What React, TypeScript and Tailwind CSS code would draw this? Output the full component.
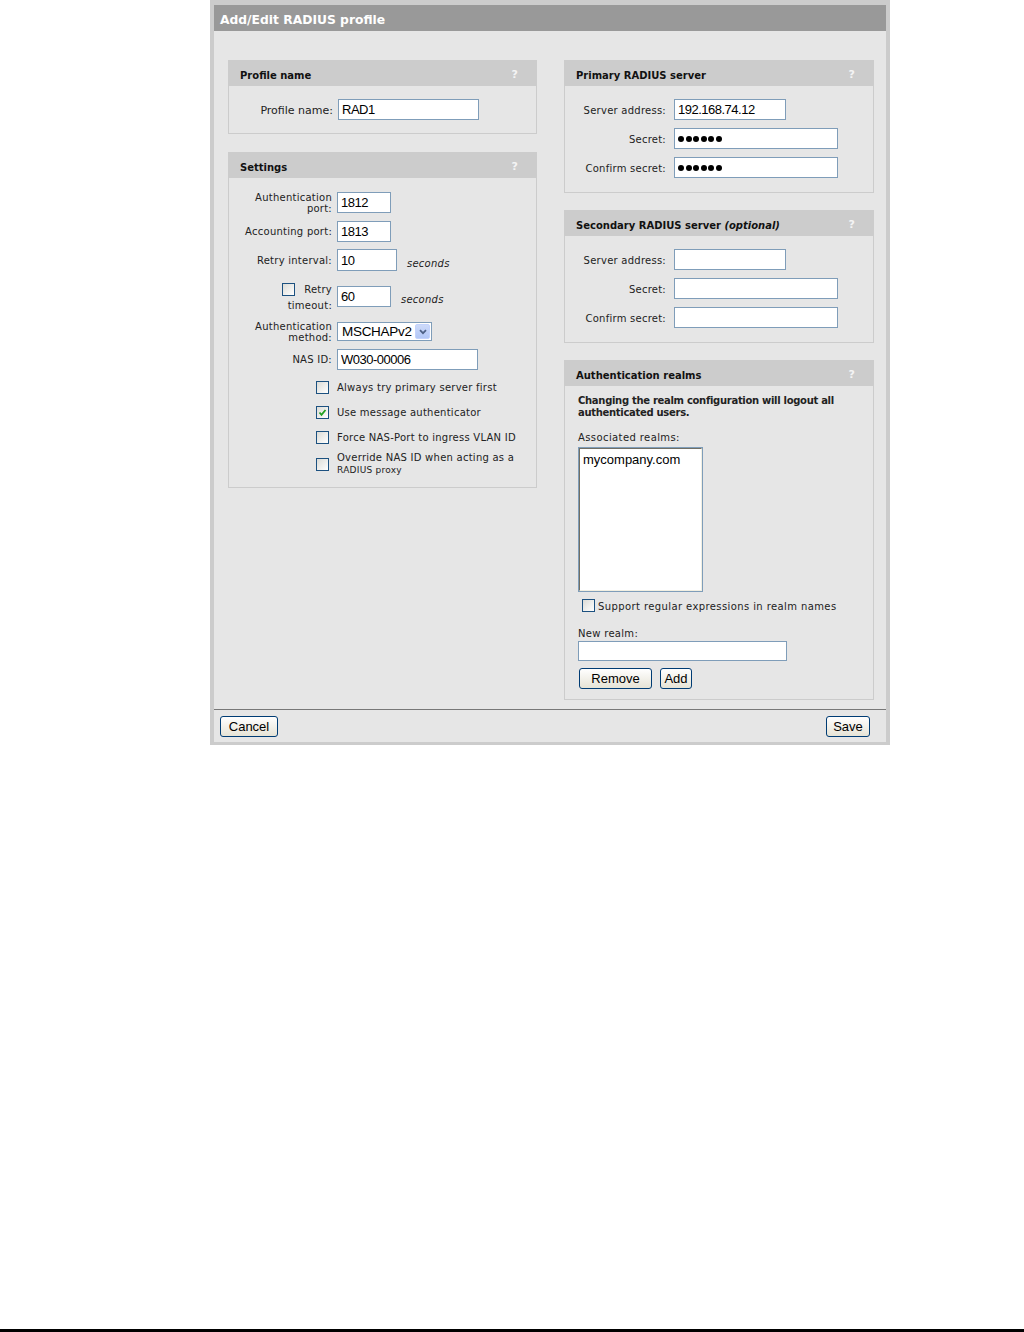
import type { ReactNode } from "react";

const verdana = "font-['DejaVu_Sans',Verdana,sans-serif] text-[10px] text-[#222]";
const labelFont = `${verdana} tracking-[0.25px]`;
const fieldFont = "font-['Liberation_Sans',Arial,sans-serif] text-black";

function Panel({ title, children }: { title: ReactNode; children: ReactNode }) {
  return (
    <div className="border border-[#cccccc] bg-[#e6e6e6]">
      <div className="flex h-[25px] items-center justify-between bg-[#cccccc] pl-[11px] pr-[18px] pt-[3px]">
        <span className="font-['DejaVu_Sans',Verdana,sans-serif] text-[10px] font-bold text-[#111]">{title}</span>
        <span className="font-['DejaVu_Sans',Verdana,sans-serif] text-[11px] font-bold text-[#f4f4f4]">?</span>
      </div>
      {children}
    </div>
  );
}

function TextBox({ value = "", width, height = 21 }: { value?: string; width: number; height?: number }) {
  return (
    <input
      readOnly
      value={value}
      style={{ width, height }}
      className={`block border border-[#7f9db9] bg-white px-[3px] text-[13px] tracking-[-0.5px] outline-none ${fieldFont}`}
    />
  );
}

function Secret({ width, filled }: { width: number; filled?: boolean }) {
  return (
    <div style={{ width }} className="flex h-[21px] items-center gap-[1.5px] border border-[#7f9db9] bg-white pl-[3px]">
      {filled &&
        [0, 1, 2, 3, 4, 5].map((i) => (
          <span key={i} className="h-[6px] w-[6px] rounded-full bg-black" />
        ))}
    </div>
  );
}

function Check({ checked }: { checked?: boolean }) {
  return (
    <span className="flex h-[13px] w-[13px] shrink-0 items-center justify-center border border-[#1c5180] bg-linear-to-br from-[#dcdcd7] to-white">
      {checked && (
        <svg width="9" height="9" viewBox="0 0 9 9">
          <path d="M1.5 4.5 L3.5 6.8 L7.5 2" fill="none" stroke="#21a121" strokeWidth="1.8" />
        </svg>
      )}
    </span>
  );
}

function Button({ children, width }: { children: ReactNode; width: number }) {
  return (
    <button
      style={{ width }}
      className={`h-[21px] rounded-[3px] border border-[#003c74] bg-linear-to-b from-white to-[#e6e3d6] text-[13px] ${fieldFont}`}
    >
      {children}
    </button>
  );
}

function Row({ label, children, className = "" }: { label: ReactNode; children: ReactNode; className?: string }) {
  return (
    <div className={`flex items-center gap-[5px] ${className}`}>
      <div className={`w-[90px] text-right leading-[11px] ${labelFont}`}>{label}</div>
      {children}
    </div>
  );
}

function CheckRow({ checked, children, className = "" }: { checked?: boolean; children: ReactNode; className?: string }) {
  return (
    <div className={`flex items-center gap-[5px] ${className}`}>
      <div className="flex w-[90px] justify-end pr-[3px]">
        <Check checked={checked} />
      </div>
      <div className={`w-[192px] leading-[12px] ${labelFont}`}>{children}</div>
    </div>
  );
}

function ServerRow({ label, children, className = "" }: { label: string; children: ReactNode; className?: string }) {
  return (
    <div className={`flex items-center gap-[8px] pl-[6px] ${className}`}>
      <div className={`w-[95px] pt-[1px] text-right ${labelFont}`}>{label}</div>
      {children}
    </div>
  );
}

function Seconds() {
  return <span className={`ml-[5px] pt-[6px] italic ${labelFont}`}>seconds</span>;
}

export default function App() {
  return (
    <div className="flex h-[1332px] flex-col bg-white">
      <div className="ml-[210px] w-[680px] border-x-4 border-t-[5px] border-b-[3px] border-[#cccccc] bg-[#e6e6e6]">
        <div className="flex h-[26px] items-center bg-[#999999] pl-[6px] pt-[4px]">
          <span className="font-['DejaVu_Sans',Verdana,sans-serif] text-[12.3px] font-bold text-white">
            Add/Edit RADIUS profile
          </span>
        </div>

        <div className="flex gap-[27px] pb-[9px] pl-[14px] pt-[29px]">
          {/* left column */}
          <div className="flex w-[309px] flex-col gap-[18px]">
            <Panel title="Profile name">
              <div className="flex items-center gap-[5px] pb-[13px] pl-[9px] pt-[13px]">
                <div className="w-[95px] pt-[3px] text-right font-['DejaVu_Sans',Verdana,sans-serif] text-[11px] text-[#222]">
                  Profile name:
                </div>
                <TextBox value="RAD1" width={141} />
              </div>
            </Panel>

            <Panel title="Settings">
              <div className="pb-[11px] pl-[13px] pt-[13px]">
                <Row label={<>Authentication<br />port:</>} className="h-[23px]">
                  <TextBox value="1812" width={54} />
                </Row>
                <Row label="Accounting port:" className="mt-[7px] h-[21px]">
                  <TextBox value="1813" width={54} />
                </Row>
                <Row label="Retry interval:" className="mt-[7px] h-[22px]">
                  <TextBox value="10" width={60} height={22} />
                  <Seconds />
                </Row>
                <Row
                  label={
                    <>
                      <div className="flex h-[18px] items-center justify-end gap-[9px]">
                        <Check />
                        <span>Retry</span>
                      </div>
                      <div className="mt-[2px] h-[12px] leading-[12px]">timeout:</div>
                    </>
                  }
                  className="mt-[9px] h-[32px]"
                >
                  <TextBox value="60" width={54} />
                  <Seconds />
                </Row>
                <Row label={<>Authentication<br />method:</>} className="mt-[8px] h-[23px]">
                  <div className="flex h-[19px] w-[95px] items-center border border-[#7f9db9] bg-white pl-[4px] pr-[1px]">
                    <span className={`flex-1 text-[13.5px] leading-none tracking-[-0.3px] ${fieldFont}`}>MSCHAPv2</span>
                    <span className="flex h-[15px] w-[15px] items-center justify-center rounded-[2px] border border-[#c3d3fd] bg-linear-to-b from-[#cddaf9] to-[#b2c7f6]">
                      <svg width="8" height="6" viewBox="0 0 8 6">
                        <path d="M1 1.2 L4 4.2 L7 1.2" fill="none" stroke="#4d6185" strokeWidth="1.7" />
                      </svg>
                    </span>
                  </div>
                </Row>
                <Row label="NAS ID:" className="mt-[6px] h-[21px]">
                  <TextBox value="W030-00006" width={141} />
                </Row>

                <CheckRow className="mt-[11px] h-[13px]">Always try primary server first</CheckRow>
                <CheckRow checked className="mt-[12px] h-[13px]">Use message authenticator</CheckRow>
                <CheckRow className="mt-[12px] h-[13px]">Force NAS-Port to ingress VLAN ID</CheckRow>
                <CheckRow className="mt-[8px] h-[24px]">
                  Override NAS ID when acting as a
                  <br />
                  <span className="text-[9px]">RADIUS proxy</span>
                </CheckRow>
              </div>
            </Panel>
          </div>

          {/* right column */}
          <div className="flex w-[310px] flex-col gap-[17px]">
            <Panel title="Primary RADIUS server">
              <div className="pb-[14px] pt-[13px]">
                <ServerRow label="Server address:">
                  <TextBox value="192.168.74.12" width={112} />
                </ServerRow>
                <ServerRow label="Secret:" className="mt-[8px]">
                  <Secret width={164} filled />
                </ServerRow>
                <ServerRow label="Confirm secret:" className="mt-[8px]">
                  <Secret width={164} filled />
                </ServerRow>
              </div>
            </Panel>

            <Panel
              title={
                <>
                  Secondary RADIUS server <i>(optional)</i>
                </>
              }
            >
              <div className="pb-[14px] pt-[13px]">
                <ServerRow label="Server address:">
                  <TextBox width={112} />
                </ServerRow>
                <ServerRow label="Secret:" className="mt-[8px]">
                  <Secret width={164} />
                </ServerRow>
                <ServerRow label="Confirm secret:" className="mt-[8px]">
                  <Secret width={164} />
                </ServerRow>
              </div>
            </Panel>

            <Panel title="Authentication realms">
              <div className="px-[13px] pb-[10px] pt-[9px]">
                <p className={`font-bold leading-[12px] tracking-[-0.3px] ${verdana}`}>
                  Changing the realm configuration will logout all authenticated users.
                </p>
                <div className={`mt-[13px] leading-[12px] tracking-[0.4px] ${verdana}`}>Associated realms:</div>
                <div className="mt-[3px] h-[145px] w-[125px] border border-[#7f9db9] bg-white">
                  <div className="h-full border-b border-l border-r border-t border-b-[#f1efe2] border-l-[#716f64] border-r-[#f1efe2] border-t-[#716f64] pl-[3px] pt-[3px]">
                    <div className={`text-[13px] leading-[15px] ${fieldFont}`}>mycompany.com</div>
                  </div>
                </div>
                <div className="ml-[4px] mt-[7px] flex h-[13px] items-center gap-[3px]">
                  <Check />
                  <span className={`pt-[2px] tracking-[0.4px] ${verdana}`}>
                    Support regular expressions in realm names
                  </span>
                </div>
                <div className={`mt-[16px] leading-[12px] tracking-[0.3px] ${verdana}`}>New realm:</div>
                <div className="mt-[1px] flex">
                  <TextBox width={209} height={20} />
                </div>
                <div className="mt-[7px] flex gap-[8px] pl-[1px]">
                  <Button width={73}>Remove</Button>
                  <Button width={32}>Add</Button>
                </div>
              </div>
            </Panel>
          </div>
        </div>

        <div className="flex items-center justify-between border-t border-[#777777] pb-[5px] pl-[6px] pr-[16px] pt-[6px]">
          <Button width={58}>Cancel</Button>
          <Button width={44}>Save</Button>
        </div>
      </div>

      <div className="mt-auto h-[3px] bg-black" />
    </div>
  );
}
